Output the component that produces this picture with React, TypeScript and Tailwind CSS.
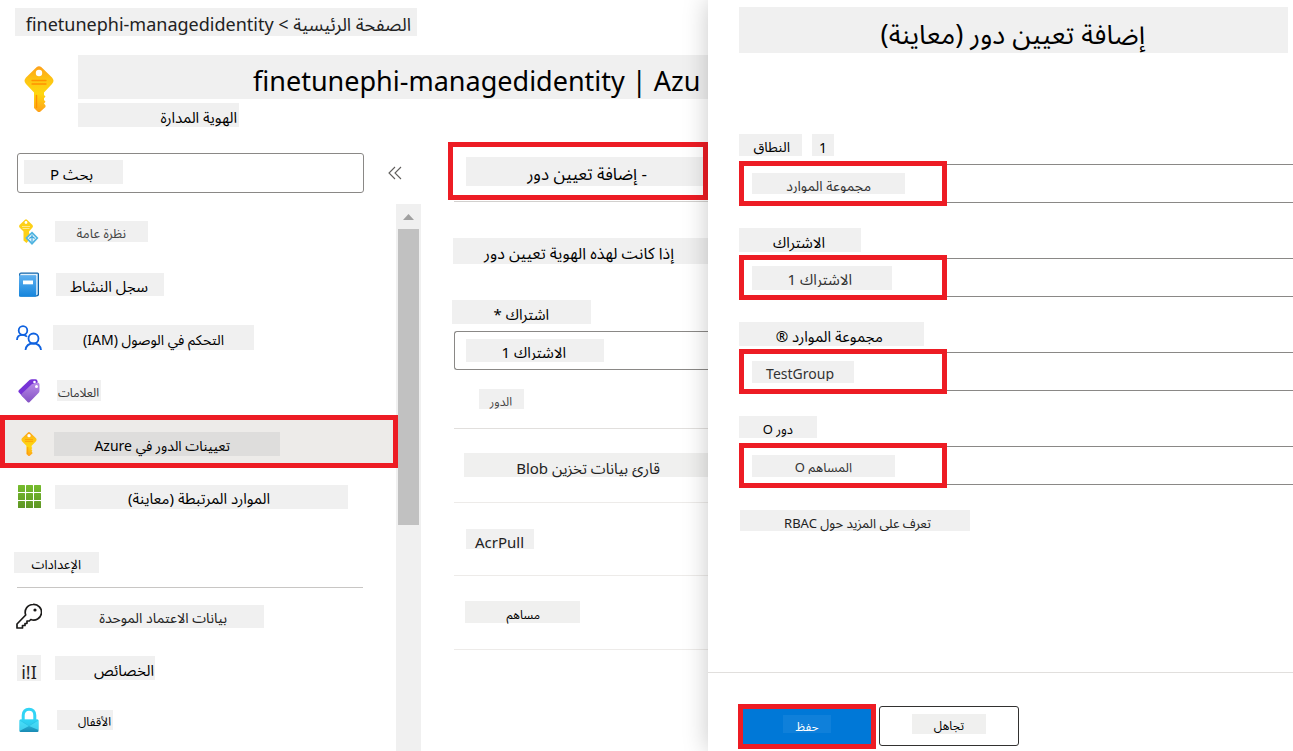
import type { ReactNode } from 'react';

function Chip({ className, dir = 'rtl', children }: { className: string; dir?: 'rtl' | 'ltr'; children: ReactNode }) {
  return (
    <span dir={dir} className={`flex shrink-0 items-center whitespace-nowrap ${className}`}>
      {children}
    </span>
  );
}

function KeyIcon({ className }: { className: string }) {
  return (
    <svg viewBox="0 0 30 46" className={className} aria-hidden="true">
      <defs>
        <linearGradient id="keyGold" x1="0" y1="0" x2="0" y2="1">
          <stop offset="0" stopColor="#fea11b" />
          <stop offset="0.3" stopColor="#fdc513" />
          <stop offset="0.6" stopColor="#ffd70f" />
          <stop offset="1" stopColor="#fea11b" />
        </linearGradient>
      </defs>
      <path
        d="M12.5 1.2Q15-.8 17.5 1.2L28 11.5Q31 14.800 28 18L20 26.500V29L21.500 30.500L20 32.300V34L21.500 35.700L20 37.500L21.500 39.500V41L16.500 45.500Q15 46.500 13.500 45.500L10 42V26.500L2 18Q-1 14.800 2 11.500Z"
        fill="url(#keyGold)"
      />
      <circle cx="15" cy="7" r="3.200" fill="#fff" />
      <path d="M8 14.500H22M8 18H22" stroke="#ff9300" strokeWidth="1.300" strokeLinecap="round" />
      <path d="M12.500 29.500V41.500" stroke="#ff9300" strokeWidth="1.400" strokeLinecap="round" />
    </svg>
  );
}

function OverviewIcon() {
  return (
    <svg viewBox="0 0 24 26" className="h-[26px] w-6" aria-hidden="true">
      <path
        d="M8 .7Q9 0 10 .7L15.500 6Q16.500 7.300 15.500 8.500L12 12.500V14L12.800 15L12 16L12.800 17L12 18.500V21L9.500 24L6.500 21.500V12.500L2.500 8.500Q1.500 7.300 2.500 6Z"
        fill="#fdd017"
      />
      <circle cx="9" cy="3.500" r="1.400" fill="#fff" />
      <path d="M5 7.500H13M5.500 9.500H12.500" stroke="#ffe98a" strokeWidth="1" />
      <path d="M15 13.700L20.300 19L15 24.700L9.500 19Z" fill="#e6f6fd" stroke="#50b4e0" strokeWidth="1.700" />
      <path d="M15 15.500V23M12.300 19.500L15 17.500L17.700 19.500" fill="none" stroke="#3aa4dc" strokeWidth="1.100" />
    </svg>
  );
}

function LogIcon() {
  return (
    <svg viewBox="0 0 24 26" className="h-[26px] w-6" aria-hidden="true">
      <defs>
        <linearGradient id="book" x1="0" y1="0" x2="0" y2="1">
          <stop offset="0" stopColor="#5eb0f0" />
          <stop offset="1" stopColor="#1585dc" />
        </linearGradient>
      </defs>
      <path d="M4 .5H20.500Q22 .5 22 2V22.500Q22 24.500 19.500 24.500H4Q2 24.500 2 22V2.500Q2 .5 4 .5Z" fill="#1065ab" />
      <path d="M3.500 1.700H20.700V22.500L19 23.500V3.800H3Z" fill="#e4f1fb" />
      <rect x="2" y="3.200" width="17.200" height="21.500" rx="1" fill="url(#book)" />
      <rect x="6" y="8.500" width="10" height="3.800" fill="#fff" />
    </svg>
  );
}

function PeopleIcon() {
  return (
    <svg viewBox="0 0 26 26" className="h-[26px] w-[26px]" aria-hidden="true" fill="none" stroke="#0f62e0" strokeWidth="1.800">
      <circle cx="7" cy="5.500" r="4.300" />
      <path d="M1 15C1 11.500 3.500 9.800 6.500 9.800C8.500 9.800 10 10.500 11 11.800" />
      <circle cx="17.500" cy="13.500" r="5" />
      <path d="M9.500 25C10 21 13 18.500 17.200 18.500S24.500 21 25 25" />
    </svg>
  );
}

function TagIcon() {
  return (
    <svg viewBox="0 0 24 26" className="h-[26px] w-6" aria-hidden="true">
      <defs>
        <linearGradient id="tag" x1="0" y1="0" x2="0" y2="1">
          <stop offset="0" stopColor="#b98ae8" />
          <stop offset="1" stopColor="#8452c4" />
        </linearGradient>
      </defs>
      <path d="M12.500 2Q13.500 1.200 15 1.200H18.500Q20.500 1.200 20.500 3.200V8L6.500 19.500L1.500 14Q1 13 2 12Z" fill="#7733d6" />
      <path d="M15 6L20.500 4.500Q22.500 4.500 22.500 6.500V12.500Q22.500 14 21.500 15L12.500 24.300Q11.500 25 10.500 24L4.500 17.500Q4 16.500 5 15.500Z" fill="url(#tag)" />
      <circle cx="17.500" cy="4" r="1.300" fill="#fff" />
      <circle cx="19.500" cy="8.500" r="1.500" fill="#fff" />
    </svg>
  );
}

function GridIcon() {
  const cells = [0, 8, 16];
  return (
    <svg viewBox="0 0 23 23" className="h-[23px] w-[23px]" aria-hidden="true">
      <defs>
        <linearGradient id="gridGreen" x1="0" y1="0" x2="0" y2="23" gradientUnits="userSpaceOnUse">
          <stop offset="0" stopColor="#76bc2d" />
          <stop offset="1" stopColor="#5e9624" />
        </linearGradient>
      </defs>
      {cells.map((y) => cells.map((x) => <rect key={`${x}-${y}`} x={x} y={y} width="7" height="7" rx="0.500" fill="url(#gridGreen)" />))}
    </svg>
  );
}

function CredentialIcon() {
  return (
    <svg viewBox="0 0 26 26" className="h-[26px] w-[26px]" aria-hidden="true" fill="none" stroke="#1b1a19" strokeWidth="1.700" strokeLinejoin="round">
      <path d="M17 1.500A7.800 7.800 0 1 1 14.800 16.500L13.300 18H11V20.300L9 20.500V22.500H6.500V25H1V21L9.700 12A7.800 7.800 0 0 1 17 1.500Z" />
      <circle cx="19" cy="7" r="1.600" fill="#1b1a19" stroke="none" />
    </svg>
  );
}

function LockIcon() {
  return (
    <svg viewBox="0 0 20 26" className="h-[26px] w-5" aria-hidden="true">
      <defs>
        <linearGradient id="lock" x1="0" y1="0" x2="0" y2="1">
          <stop offset="0" stopColor="#32d4f5" />
          <stop offset="1" stopColor="#198ab3" />
        </linearGradient>
      </defs>
      <path d="M4.200 13V8.200C4.200 4.500 6.500 2.300 10 2.300S15.800 4.500 15.800 8.200V13" fill="none" stroke="#32d4f5" strokeWidth="3" />
      <rect x="0.500" y="12.500" width="19" height="12.500" rx="1" fill="url(#lock)" />
      <path d="M.5 13.500L10 19L19.500 13.500V23L10 19L.5 24Z" fill="#50e6ff" opacity="0.700" />
      <path d="M1 12.500H19L10 19Z" fill="#32d4f5" opacity="0.700" />
    </svg>
  );
}

type NavItem = { label: string; icon: ReactNode; chip: string; selected?: boolean };

const mainItems: NavItem[] = [
  { label: 'نظرة عامة', icon: <OverviewIcon />, chip: 'ml-[55px] h-[21px] w-[93px] pr-[22px] text-[13px] text-[#444]' },
  { label: 'سجل النشاط', icon: <LogIcon />, chip: 'ml-[56px] h-[23px] w-[108px] pr-4 text-[15px]' },
  { label: 'التحكم في الوصول (IAM)', icon: <PeopleIcon />, chip: 'ml-[53px] h-[25px] w-[201px] pr-[30px] text-sm' },
  { label: 'العلامات', icon: <TagIcon />, chip: 'ml-[57px] h-[21px] w-[44px] pr-0.5 text-xs text-[#333]' },
  {
    label: 'تعيينات الدور في Azure',
    icon: <KeyIcon className="h-6 w-4" />,
    chip: 'ml-[49px] h-6 w-[226px] bg-[#dedddc] pr-[50px] text-sm',
    selected: true,
  },
  { label: 'الموارد المرتبطة (معاينة)', icon: <GridIcon />, chip: 'ml-[55px] h-6 w-[293px] pr-[78px] text-[15px]' },
];

const settingItems: NavItem[] = [
  { label: 'بيانات الاعتماد الموحدة', icon: <CredentialIcon />, chip: 'ml-[57px] h-[23px] w-[207px] pr-[37px] text-sm text-[#222]' },
  {
    label: 'الخصائص',
    icon: (
      <Chip dir="ltr" className="h-[26px] w-6 justify-center bg-[#f0f0f0] pt-2 text-lg leading-none text-[#222]">
        i!I
      </Chip>
    ),
    chip: 'ml-[55px] h-6 w-[100px] pr-px text-[15px]',
  },
  { label: 'الأقفال', icon: <LockIcon />, chip: 'ml-[57px] h-5 w-[56px] pr-0.5 text-xs' },
];

function NavRow({ item, height = 'h-[53px]' }: { item: NavItem; height?: string }) {
  return (
    <li>
      <a
        href="#"
        aria-current={item.selected ? 'page' : undefined}
        className={`relative flex items-center pt-1 ${height} ${
          item.selected ? 'z-10 -mr-0.5 border-[5px] border-[#ed1c24] bg-[#edebe9]' : ''
        }`}
      >
        <span className={item.selected ? 'absolute left-0 flex w-12 justify-center' : 'absolute left-0 flex w-[58px] justify-center'}>
          {item.icon}
        </span>
        <Chip className={`pt-1 leading-none ${item.selected ? '' : 'bg-[#f0f0f0]'} ${item.chip}`}>{item.label}</Chip>
      </a>
    </li>
  );
}

function Field({
  id,
  label,
  extra,
  labelChip,
  value,
  valueChip,
}: {
  id: string;
  label: string;
  extra?: string;
  labelChip: string;
  value: string;
  valueChip: string;
}) {
  return (
    <div className="mb-[25px]">
      <div className="mb-1.5 flex h-6 items-start gap-2.5">
        <label htmlFor={id}>
          <Chip className={`bg-[#f0f0f0] pt-1 leading-none ${labelChip}`}>{label}</Chip>
        </label>
        {extra && <Chip className="h-[22px] w-[22px] justify-center bg-[#f0f0f0] pt-1.5 text-sm leading-none">{extra}</Chip>}
      </div>
      <div className="relative flex h-[39px] items-center border-y border-[#8a8886] pl-[13px]">
        <div className="pointer-events-none absolute -top-1 left-0 h-[45px] w-[208px] border-[5px] border-[#ed1c24]" />
        <select id={id} dir="rtl" className={`appearance-none bg-[#f0f0f0] pl-1 pt-1 leading-none text-[#333] ${valueChip}`}>
          <option>{value}</option>
        </select>
      </div>
    </div>
  );
}

export default function App() {
  return (
    <div className="grid min-h-screen grid-cols-[708fr_585fr] overflow-hidden bg-white font-['Noto_Sans','Noto_Sans_Arabic',sans-serif] text-black">
      <main className="flex min-w-0 flex-col overflow-hidden">
        <header>
          <nav className="flex pl-[15px] pt-2">
            <Chip className="h-7 w-[402px] bg-[#f0f0f0] pr-1.5 pt-1 text-lg leading-none text-[#222]">
              الصفحة الرئيسية &gt; finetunephi-managedidentity
            </Chip>
          </nav>
          <div className="mt-[19px] flex h-[72px]">
            <KeyIcon className="ml-6 mt-[11px] h-[46px] w-[30px] shrink-0" />
            <div className="ml-6 min-w-0 flex-1">
              <h1 className="h-11 overflow-hidden whitespace-nowrap bg-[#f0f0f0] pl-[175px] pt-2 text-[27px] leading-9">
                finetunephi-managedidentity | Azu
              </h1>
              <Chip className="mt-1 h-6 w-[161px] bg-[#f0f0f0] pr-0.5 pt-1 text-[15px] leading-none">الهوية المدارة</Chip>
            </div>
          </div>
        </header>

        <div className="flex flex-1">
          <aside className="flex w-[421px] shrink-0 flex-col">
            <div className="flex pl-[17px] pt-[26px]">
              <div className="flex h-10 w-[347px] items-center rounded-[3px] border border-[#8a8886] pl-1.5">
                <input
                  type="text"
                  aria-label="بحث"
                  dir="rtl"
                  defaultValue="بحث P"
                  className="-mt-0.5 h-6 w-[99px] bg-[#f0f0f0] pr-[30px] pt-1.5 text-[15px] leading-none"
                />
              </div>
              <button type="button" aria-label="طي" className="ml-[19px] flex w-6 items-center justify-center">
                <svg viewBox="0 0 14 14" className="h-3.5 w-3.5" fill="none" stroke="#605e5c" strokeWidth="1.100">
                  <path d="M7 1L1 7L7 13M13 1L7 7L13 13" />
                </svg>
              </button>
            </div>
            <div className="mt-2.5 flex flex-1">
              <nav className="min-w-0 flex-1">
                <ul>
                  {mainItems.map((item) => (
                    <NavRow key={item.label} item={item} />
                  ))}
                </ul>
                <h2 className="flex pl-3.5 pt-[31px]">
                  <Chip className="h-[21px] w-[85px] bg-[#f0f0f0] pr-[18px] pt-1 text-[13px] leading-none">الإعدادات</Chip>
                </h2>
                <hr className="ml-[17px] mr-[33px] mt-3.5 border-[#c8c6c4]" />
                <ul>
                  {settingItems.map((item) => (
                    <NavRow key={item.label} item={item} height="h-[52px]" />
                  ))}
                </ul>
              </nav>
              <div className="mt-px flex w-[25px] flex-col items-center bg-[#f0f0f0]">
                <svg viewBox="0 0 25 25" className="h-[25px] w-[25px]" aria-hidden="true">
                  <path d="M7 16L12.500 10L18 16Z" fill="#a0a0a0" />
                </svg>
                <div className="h-[296px] w-[21px] bg-[#c1c1c1]" />
              </div>
            </div>
          </aside>

          <section className="min-w-0 flex-1 pt-[15px]">
            <button type="button" className="ml-[27px] flex h-[58px] w-[260px] items-center border-[5px] border-[#ed1c24] pl-[13px]">
              <Chip className="h-[29px] w-[237px] bg-[#f0f0f0] pr-[56px] pt-1 text-[17px] leading-none">- إضافة تعيين دور</Chip>
            </button>
            <hr className="ml-[33px] mt-px border-[#d2d0ce]" />
            <Chip className="ml-8 mt-9 h-[26px] bg-[#f0f0f0] pr-[34px] pt-1 text-base leading-none">إذا كانت لهذه الهوية تعيين دور</Chip>
            <label htmlFor="subscription" className="mt-9 flex pl-[31px]">
              <Chip className="h-6 w-[139px] bg-[#f0f0f0] pr-[42px] pt-1 text-[15px] leading-none">اشتراك *</Chip>
            </label>
            <div className="ml-[33px] mt-[7px] flex h-[39px] items-center rounded-l-[3px] border border-r-0 border-[#8a8886] pl-[11px]">
              <select
                id="subscription"
                dir="rtl"
                className="h-[23px] w-[138px] appearance-none bg-[#f0f0f0] pl-1 pr-[38px] pt-1 text-[15px] leading-none"
              >
                <option>الاشتراك 1</option>
              </select>
            </div>
            <table className="ml-[33px] w-[254px] table-fixed border-collapse">
              <thead>
                <tr className="h-[58px] border-b border-[#e1dfdd]">
                  <th className="pl-[25px] font-normal">
                    <Chip className="h-5 w-[45px] bg-[#f0f0f0] pr-3 pt-1.5 text-xs leading-none text-[#444]">الدور</Chip>
                  </th>
                </tr>
              </thead>
              <tbody>
                <tr className="h-[74px] border-b border-[#edebe9]">
                  <td className="pl-2.5">
                    <Chip className="h-6 bg-[#f0f0ef] pr-12 pt-1.5 text-[15px] leading-none text-[#222]">قارئ بيانات تخزين Blob</Chip>
                  </td>
                </tr>
                <tr className="h-[73px] border-b border-[#edebe9]">
                  <td className="pl-3">
                    <Chip dir="ltr" className="h-5 w-[68px] bg-[#f0f0f0] pl-[9px] pt-2 text-[15px] leading-none text-[#222]">
                      AcrPull
                    </Chip>
                  </td>
                </tr>
                <tr className="h-[74px] border-b border-[#edebe9]">
                  <td className="pl-[11px]">
                    <Chip className="h-[22px] w-[115px] bg-[#f0f0ef] pr-10 pt-1.5 text-xs leading-none">مساهم</Chip>
                  </td>
                </tr>
              </tbody>
            </table>
          </section>
        </div>
      </main>

      <aside className="relative z-20 flex min-w-0 flex-col bg-white shadow-[0_0_24px_rgba(0,0,0,0.22)]">
        <h2 className="flex pl-[31px] pr-[5px] pt-[7px]">
          <Chip className="h-[46px] flex-1 bg-[#f0f0f0] pr-[143px] pt-1.5 text-[27px] leading-none">إضافة تعيين دور (معاينة)</Chip>
        </h2>
        <form className="mt-[81px] flex-1 pl-[31px]">
          <Field
            id="scope"
            label="النطاق"
            extra="1"
            labelChip="h-[22px] w-[63px] pr-3 text-sm"
            value="مجموعة الموارد"
            valueChip="h-[21px] w-[153px] pr-[34px] text-sm"
          />
          <Field
            id="panel-subscription"
            label="الاشتراك"
            labelChip="h-6 w-[122px] pr-9 text-[15px]"
            value="الاشتراك 1"
            valueChip="h-6 w-[140px] pr-10 text-[15px]"
          />
          <Field
            id="group"
            label="مجموعة الموارد ®"
            labelChip="h-6 w-[185px] pr-[41px] text-[15px]"
            value="TestGroup"
            valueChip="h-[22px] w-[102px] pr-5 text-sm"
          />
          <Field
            id="role"
            label="دور O"
            labelChip="h-[22px] w-[78px] pr-6 text-[13px]"
            value="المساهم O"
            valueChip="h-[22px] w-[143px] pr-[43px] text-[13px]"
          />
          <a href="#" className="flex pl-px">
            <Chip className="h-[21px] w-[230px] bg-[#f0f0f0] pr-[39px] pt-1.5 text-[13px] leading-none text-[#222]">
              تعرف على المزيد حول RBAC
            </Chip>
          </a>
        </form>
        <footer className="flex h-[79px] items-center gap-[3px] border-t border-[#e1dfdd] pl-[30px] pt-7">
          <button type="button" className="flex h-[45px] w-[138px] items-center justify-center border-[5px] border-[#ed1c24] bg-[#0078d7]">
            <Chip className="-mt-1 h-[18px] w-12 justify-center bg-[#0f80da] pt-1.5 text-xs leading-none text-white">حفظ</Chip>
          </button>
          <button type="button" className="flex h-10 w-[140px] items-center justify-center rounded-[3px] border border-[#323130]">
            <Chip className="-mt-1 h-5 w-[74px] bg-[#f0f0ef] pr-[22px] pt-1 text-xs leading-none">تجاهل</Chip>
          </button>
        </footer>
      </aside>
    </div>
  );
}
